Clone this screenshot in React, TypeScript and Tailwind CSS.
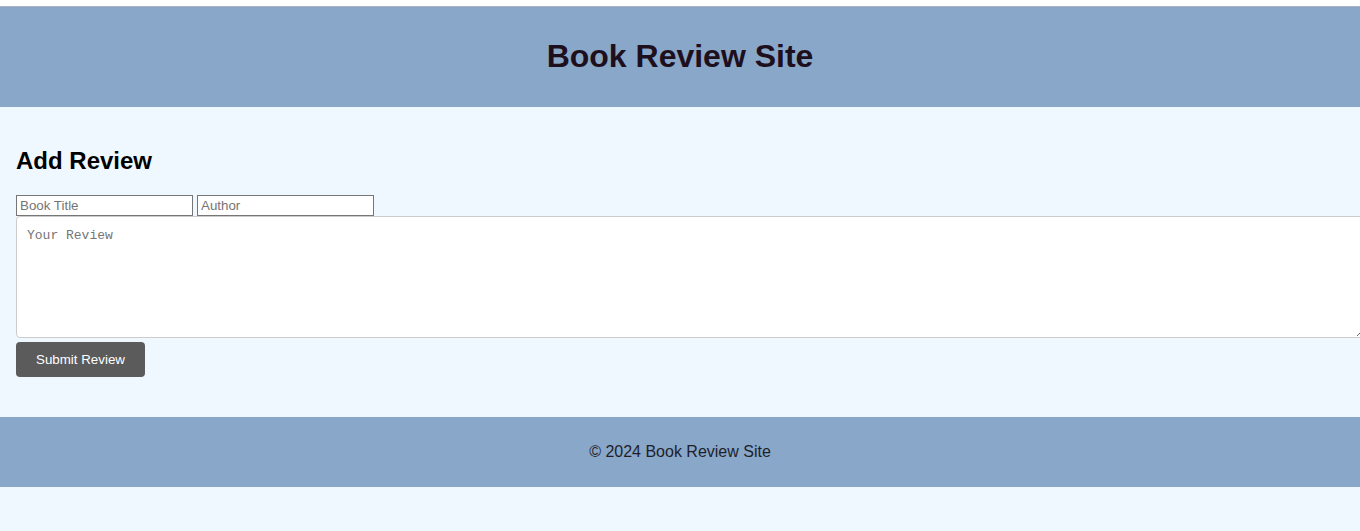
export default function App() {
  return (
    <div className="w-[1360px] h-[531px] overflow-hidden bg-[#f0f8ff] font-['Liberation_Sans',Arial,sans-serif]">
      <div className="h-[6px] bg-white" />
      <div className="h-px bg-[#aab4c4]" />
      <header className="h-[100px] bg-[#88a7c9] flex items-center justify-center pb-[2px]">
        <h1 className="text-[32px] font-bold text-[#1e0f1c] leading-none">Book Review Site</h1>
      </header>
      <main className="px-4 pt-5 pb-5">
        <h2 className="text-[24px] font-bold text-black leading-[28px] mt-5 mb-5">Add Review</h2>
        <form className="flex flex-col items-start" onSubmit={(e) => e.preventDefault()}>
          <div className="flex gap-1">
            <input
              type="text"
              placeholder="Book Title"
              className="w-[177px] h-[21px] border border-[#767676] bg-white px-[3px] text-[13.33px] text-black placeholder:text-[#757575] outline-none font-['Liberation_Sans',Arial,sans-serif]"
            />
            <input
              type="text"
              placeholder="Author"
              className="w-[177px] h-[21px] border border-[#767676] bg-white px-[3px] text-[13.33px] text-black placeholder:text-[#757575] outline-none font-['Liberation_Sans',Arial,sans-serif]"
            />
          </div>
          <textarea
            placeholder="Your Review"
            className="box-content w-full h-[99px] pt-[11px] pb-[10px] px-[10px] border border-[#cccccc] rounded-[4px] bg-white text-[13px] leading-[15px] placeholder:text-[#757575] outline-none font-['Liberation_Mono','DejaVu_Sans_Mono',monospace]"
          />
          <button
            type="submit"
            className="mt-1 h-[35px] w-[129px] rounded-[4px] bg-[#5b5b5b] text-white text-[13.33px] flex items-center justify-center"
          >
            Submit Review
          </button>
        </form>
      </main>
      <footer className="mt-5 h-[70px] bg-[#88a7c9] flex items-center justify-center">
        <p className="text-[16px] text-[#1f1f2a]">© 2024 Book Review Site</p>
      </footer>
    </div>
  );
}
